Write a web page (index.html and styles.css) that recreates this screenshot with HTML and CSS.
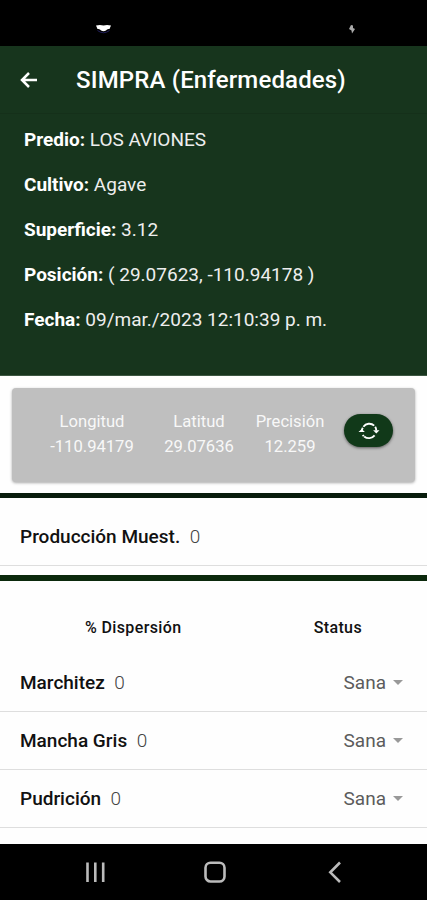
FILE: index.html
```html
<!DOCTYPE html>
<html lang="es">
<head>
<meta charset="utf-8">
<meta name="viewport" content="width=device-width, initial-scale=1">
<title>SIMPRA (Enfermedades)</title>
<link rel="stylesheet" href="styles.css">
</head>
<body>
<div class="status-bar">
  <svg class="notice" width="17" height="11" viewBox="0 0 17 11"><path d="M1 1.500Q5 .5 8.500 1.500Q12 .5 16 1.500L14.500 5Q12 4.500 11 6.500Q8.500 8 6 6.500Q5 4.500 2.500 5Z" fill="#fff"/><path d="M2.500 6.500Q8.500 11 14.500 6.500" fill="none" stroke="#22205c"/></svg>
  <svg class="bolt" width="8" height="11" viewBox="0 0 8 11"><path d="M3 1L5 1.500V4L7 5L4 9.500L3.500 6.500L1 5Z" fill="#aaa"/></svg>
</div>
<header class="toolbar">
  <svg class="back" width="18" height="16" viewBox="0 0 18 16"><path d="M9 1L2 8L9 15M2 8H17" fill="none" stroke="#fff" stroke-width="2.500"/></svg>
  <h1>SIMPRA (Enfermedades)</h1>
</header>
<section class="info">
  <p><b>Predio:</b> LOS AVIONES</p>
  <p><b>Cultivo:</b> Agave</p>
  <p><b>Superficie:</b> 3.12</p>
  <p><b>Posición:</b> ( 29.07623, -110.94178 )</p>
  <p><b>Fecha:</b> 09/mar./2023 12:10:39 p. m.</p>
</section>
<section class="card">
  <dl class="lon"><dt>Longitud</dt><dd>-110.94179</dd></dl>
  <dl class="lat"><dt>Latitud</dt><dd>29.07636</dd></dl>
  <dl class="acc"><dt>Precisión</dt><dd>12.259</dd></dl>
  <button class="refresh" aria-label="Actualizar">
    <svg width="22" height="18" viewBox="0 0 22 18"><path d="M5.400 4.800A7.300 7.300 0 0 1 16.200 3.600M17.200 4.800A7.400 7.400 0 0 1 18.300 8.500M4.800 5.700A7.300 7.300 0 0 0 3.700 9.500M4.800 12.900A7.400 7.400 0 0 0 5.800 14.200M6.200 14.400A7.300 7.300 0 0 0 16.600 13.400" fill="none" stroke="#fff" stroke-width="1.900"/><path d="M.5 10L3.700 6.900L6.900 10ZM15.100 8.200H21.500L18.300 11.400Z" fill="#fff"/></svg>
  </button>
</section>
<div class="bar"></div>
<div class="row production"><b>Producción Muest.</b><span>0</span></div>
<div class="bar second"></div>
<div class="heads"><span class="disp">% Dispersión</span><span class="stat">Status</span></div>
<div class="row"><b>Marchitez</b><span>0</span><div class="select">Sana<i></i></div></div>
<div class="row"><b>Mancha Gris</b><span>0</span><div class="select">Sana<i></i></div></div>
<div class="row"><b>Pudrición</b><span>0</span><div class="select">Sana<i></i></div></div>
<nav class="nav">
  <svg width="22" height="22" viewBox="0 0 22 22"><path d="M3.500 1.500V21M11.300 1.500V21M19.200 1.500V21"/></svg>
  <svg width="22" height="22" viewBox="0 0 22 22"><rect x="1.500" y="1.800" width="19" height="18.700" rx="5"/></svg>
  <svg width="22" height="22" viewBox="0 0 22 22"><path d="M16 1.500L6.300 11.300L16 21"/></svg>
</nav>
</body>
</html>
```
FILE: styles.css
```css
* { box-sizing: border-box; }
body { margin: 0; height: 900px; display: flex; flex-direction: column; overflow: hidden; background: #fefefe; font-family: Roboto, sans-serif; color: #111; }
h1, p, dl, dd { margin: 0; }
b { font-weight: 700; }
svg { display: block; flex: none; }
.status-bar { height: 46px; flex: none; background: #000; display: flex; justify-content: space-between; padding: 24px 71px 0 95px; }
.toolbar { height: 68px; flex: none; background: #17351d; display: flex; align-items: center; padding: 0 20px; border-bottom: 1px solid #15301a; }
.toolbar h1 { margin-left: 38px; font-size: 24px; font-weight: 500; letter-spacing: 0.15px; color: #fff; white-space: nowrap; }
.info { height: 262px; flex: none; background: #17351d; border-bottom: 1px solid #3d5742; padding: 3px 24px 0; color: #eee; font-size: 19px; line-height: 45px; white-space: nowrap; }
.info b { color: #fff; }
.card { flex: none; margin: 12px 12px 11px; height: 94px; display: flex; padding: 21px 0 0 38px; background: #bfbfbf; border-radius: 4px; box-shadow: 0 1px 3px #0005; color: #f8f8f8; font-size: 16.600px; line-height: 25px; text-align: center; }
.lon { width: 84px; }
.lat { width: 70px; margin-left: 30px; }
.acc { width: 70px; margin-left: 21px; }
.refresh { width: 49px; height: 33px; margin: 5px 0 0 19px; padding: 0; border: 0; border-radius: 17px; background: #113919; display: grid; place-items: center; box-shadow: 0 1px 3px #0008; }
.bar { height: 5px; flex: none; background: #081c0c; }
.second { margin-top: 9px; height: 6px; background: #0b290c; }
.row { height: 58px; flex: none; border-bottom: 1px solid #dedede; display: flex; align-items: center; padding: 0 24px 0 20px; font-size: 19px; white-space: nowrap; }
.row b { font-weight: 500; }
.row > span { margin-left: 9.500px; color: #444; font-weight: 300; }
.production { height: 68px; padding-top: 9px; }
.heads { height: 73px; flex: none; display: flex; padding: 37px 65px 0 85px; justify-content: space-between; font-size: 16px; line-height: 20px; font-weight: 500; letter-spacing: 0.370px; }
.select { display: flex; align-items: center; gap: 7px; margin: 0 0 1px auto; color: #5c5c5c; }
.select i { border: 5px solid transparent; border-top-color: #999; border-bottom: 0; }
.nav { height: 56px; flex: none; margin-top: auto; background: #000; display: flex; justify-content: space-between; align-items: center; padding: 0 81px 0 84px; }
.nav svg { fill: none; stroke: #bbb; stroke-width: 2.600; }
```
